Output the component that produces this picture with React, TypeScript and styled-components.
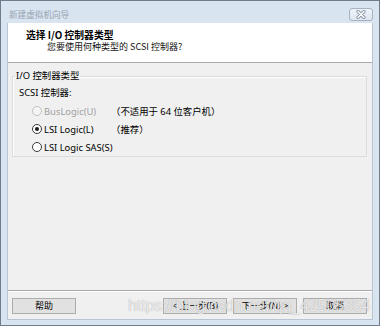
import styled, { createGlobalStyle } from "styled-components";

const GlobalStyle = createGlobalStyle`
  html, body {
    margin: 0;
    padding: 0;
    background: #ffffff;
  }
  * {
    box-sizing: border-box;
  }
`;

const Window = styled.div`
  position: relative;
  width: 380px;
  height: 326px;
  border: 1px solid #6f7c8c;
  background: #d9e4f1;
  padding: 0 6px 5px 6px;
  display: flex;
  flex-direction: column;
  font-family: "Noto Sans", "Noto Sans CJK SC", sans-serif;
  font-size: 9.4px;
  color: #000000;
  overflow: hidden;
`;

const TitleBar = styled.div`
  height: 22px;
  display: flex;
  align-items: center;
  justify-content: space-between;
  padding: 0 0 0 2px;
`;

const Caption = styled.span`
  font-family: "Noto Sans CJK SC", sans-serif;
  font-size: 8.6px;
  color: #97a3b0;
  line-height: 12px;
  margin-top: 4px;
`;

const CloseButton = styled.div`
  width: 24px;
  height: 13px;
  margin-top: 4px;
  border: 1px solid #a6b2c0;
  border-radius: 3px;
  background: linear-gradient(#eef3f9, #dde6f0);
  display: flex;
  align-items: center;
  justify-content: center;
`;

const Client = styled.div`
  flex: 1;
  background: #f0f0f0;
  border: 1px solid #b8c5d4;
  border-top: none;
  display: flex;
  flex-direction: column;
`;

const Header = styled.div`
  height: 40px;
  background: #ffffff;
  border-bottom: 1px solid #a9a9a9;
  padding: 6px 0 0 18px;
  display: flex;
  flex-direction: column;
`;

const Heading = styled.div`
  font-family: "Noto Sans CJK SC", sans-serif;
  font-weight: 700;
  font-size: 9.8px;
  line-height: 12px;
  color: #000000;
`;

const SubHeading = styled.div`
  font-family: "Noto Sans CJK SC", sans-serif;
  font-size: 9px;
  line-height: 12px;
  margin-left: 21px;
  color: #111111;
`;

const Body = styled.div`
  flex: 1;
  padding: 7px 5px 0 4px;
`;

const GroupBox = styled.fieldset`
  margin: 0;
  padding: 0 0 0 2px;
  border: 1px solid #dcdcdc;
  box-shadow: inset 1px 1px 0 #ffffff;
  min-inline-size: 0;
`;

const GroupLegend = styled.legend`
  padding: 0 1px;
  line-height: 12px;
  font-size: 9.4px;
`;

const FieldLabel = styled.div`
  height: 18px;
  line-height: 18px;
  padding-left: 4px;
  margin-top: 2px;
  color: #000000;
`;

const RadioRow = styled.div<{ $disabled?: boolean }>`
  height: 18px;
  display: flex;
  align-items: center;
  padding-left: 17px;
  white-space: nowrap;
  color: ${(p) => (p.$disabled ? "#a0a0a0" : "#000000")};
`;

const RadioDot = styled.span<{ $checked?: boolean; $disabled?: boolean }>`
  flex: none;
  width: 10px;
  height: 10px;
  border-radius: 50%;
  border: 1px solid ${(p) => (p.$disabled ? "#c2c2c2" : "#3a3a3a")};
  background: ${(p) => (p.$disabled ? "#f4f4f4" : "#ffffff")};
  margin-right: 2px;
  display: flex;
  align-items: center;
  justify-content: center;

  &::after {
    content: "";
    width: 4px;
    height: 4px;
    border-radius: 50%;
    background: #1a1a1a;
    display: ${(p) => (p.$checked ? "block" : "none")};
  }
`;

const OptionText = styled.span`
  min-width: 67px;
`;

const Note = styled.span`
  color: #000000;
`;

const Footer = styled.div`
  border-top: 1px solid #a9a9a9;
  box-shadow: inset 0 1px 0 #ffffff;
  padding: 7px 5px 5px 4px;
  display: flex;
  align-items: center;
`;

const Spacer = styled.div`
  flex: 1;
`;

const ButtonGroup = styled.div`
  display: flex;
  gap: 6px;
`;

const Button = styled.button`
  width: 64px;
  height: 16px;
  padding: 0;
  border: 1px solid #adadad;
  background: #e1e1e1;
  font-family: "Noto Sans", "Noto Sans CJK SC", sans-serif;
  font-size: 9px;
  line-height: 14px;
  color: #000000;
  white-space: nowrap;
`;

const Watermark = styled.div`
  position: absolute;
  left: 127px;
  top: 295px;
  font-family: "Liberation Sans", sans-serif;
  font-size: 15.8px;
  line-height: 20px;
  color: rgba(255, 255, 255, 0.75);
  text-shadow: 0 0 1px rgba(120, 120, 120, 0.7);
  pointer-events: none;
  white-space: nowrap;
`;

function CloseGlyph() {
  return (
    <svg width="12" height="9" viewBox="0 0 12 9">
      <path d="M3 1.5 L9 7.5 M9 1.5 L3 7.5" stroke="#8d98a6" strokeWidth="3.2" strokeLinecap="round" />
      <path d="M3 1.5 L9 7.5 M9 1.5 L3 7.5" stroke="#ffffff" strokeWidth="1.4" strokeLinecap="round" />
    </svg>
  );
}

const options = [
  { label: "BusLogic(U)", note: "（不适用于 64 位客户机）", disabled: true, checked: false },
  { label: "LSI Logic(L)", note: "（推荐）", disabled: false, checked: true },
  { label: "LSI Logic SAS(S)", note: "", disabled: false, checked: false },
];

export default function App() {
  return (
    <>
      <GlobalStyle />
      <Window>
        <TitleBar>
          <Caption>新建虚拟机向导</Caption>
          <CloseButton>
            <CloseGlyph />
          </CloseButton>
        </TitleBar>
        <Client>
          <Header>
            <Heading>选择 I/O 控制器类型</Heading>
            <SubHeading>您要使用何种类型的 SCSI 控制器?</SubHeading>
          </Header>
          <Body>
            <GroupBox>
              <GroupLegend>I/O 控制器类型</GroupLegend>
              <FieldLabel>SCSI 控制器:</FieldLabel>
              {options.map((o) => (
                <RadioRow key={o.label} $disabled={o.disabled}>
                  <RadioDot $checked={o.checked} $disabled={o.disabled} />
                  <OptionText>{o.label}</OptionText>
                  {o.note && <Note>{o.note}</Note>}
                </RadioRow>
              ))}
            </GroupBox>
          </Body>
          <Footer>
            <Button>帮助</Button>
            <Spacer />
            <ButtonGroup>
              <Button>&lt; 上一步(B)</Button>
              <Button>下一步(N) &gt;</Button>
              <Button>取消</Button>
            </ButtonGroup>
          </Footer>
        </Client>
        <Watermark>https://blog.csdn.net/qq_42505354</Watermark>
      </Window>
    </>
  );
}
